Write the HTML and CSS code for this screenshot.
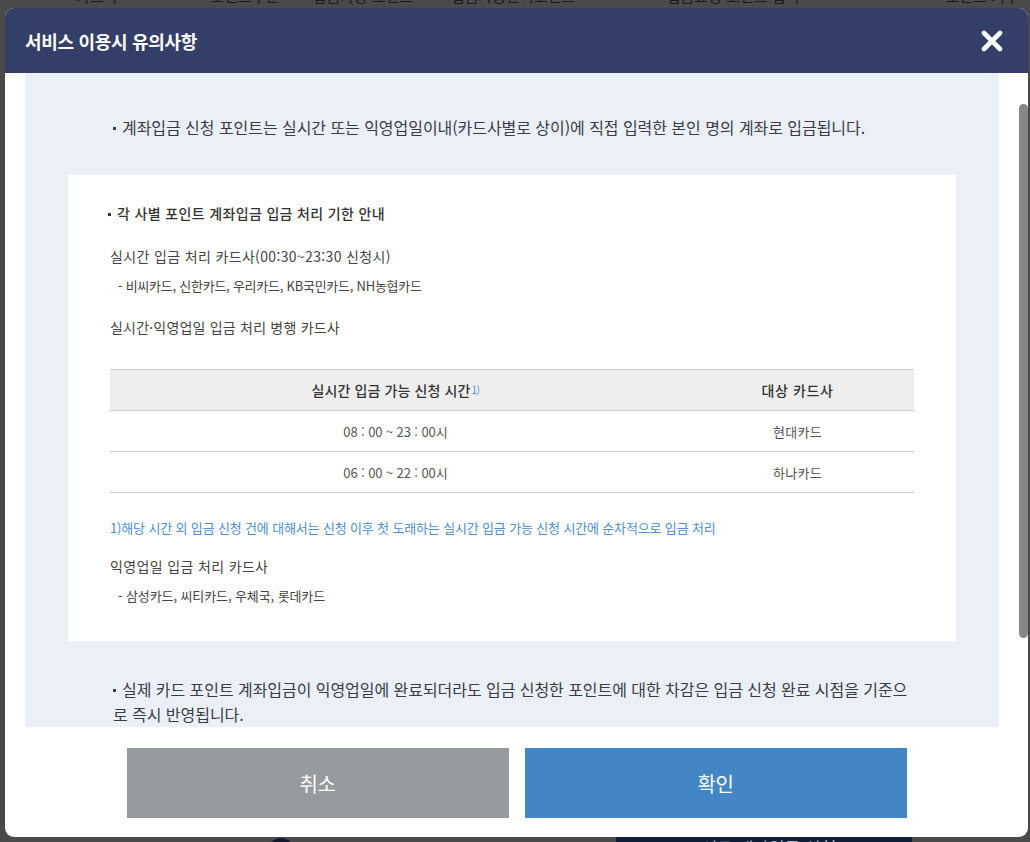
FILE: index.html
```html
<!DOCTYPE html>
<html lang="ko">
<head>
<meta charset="utf-8">
<title>서비스 이용시 유의사항</title>
<link rel="stylesheet" href="styles.css">
</head>
<body>
<div class="page">
  <div class="bg-head">
    <span class="c1">카드사</span>
    <span class="c2">포인트구분</span>
    <span class="c3">입금가능 포인트</span>
    <span class="c4">입금가능잔여포인트</span>
    <span class="c5">입금요청 포인트 입력</span>
    <span class="c6">포인트 기부</span>
  </div>
  <div class="bg-foot">
    <span class="bg-dot"></span>
    <span class="bg-btn">포인트 계좌입금 신청</span>
  </div>

  <div class="modal">
    <div class="modal-head">
      <h1 class="modal-title">서비스 이용시 유의사항</h1>
      <button class="close-btn" aria-label="닫기">
        <svg width="22" height="22" viewBox="0 0 22 22"><path d="M3 3 L19 19 M19 3 L3 19" stroke="#fff" stroke-width="4.6" stroke-linecap="round"/></svg>
      </button>
    </div>
    <div class="modal-body">
      <div class="scroll-area">
        <p class="note"><span class="dot"></span>계좌입금 신청 포인트는 실시간 또는 익영업일이내(카드사별로 상이)에 직접 입력한 본인 명의 계좌로 입금됩니다.</p>
        <div class="info-box">
          <p class="info-title"><span class="dot dot2"></span>각 사별 포인트 계좌입금 입금 처리 기한 안내</p>
          <p class="line l-a">실시간 입금 처리 카드사(00:30~23:30 신청시)</p>
          <p class="sub l-b">- 비씨카드, 신한카드, 우리카드, KB국민카드, NH농협카드</p>
          <p class="line l-c">실시간·익영업일 입금 처리 병행 카드사</p>
          <table class="tbl">
            <thead>
              <tr><th class="col1">실시간 입금 가능 신청 시간<sup>1)</sup></th><th class="col2">대상 카드사</th></tr>
            </thead>
            <tbody>
              <tr><td>08 : 00 ~ 23 : 00시</td><td class="card">현대카드</td></tr>
              <tr><td>06 : 00 ~ 22 : 00시</td><td class="card">하나카드</td></tr>
            </tbody>
          </table>
          <p class="foot-note">1)해당 시간 외 입금 신청 건에 대해서는 신청 이후 첫 도래하는 실시간 입금 가능 신청 시간에 순차적으로 입금 처리</p>
          <p class="line line2 l-d">익영업일 입금 처리 카드사</p>
          <p class="sub sub2 l-b">- 삼성카드, 씨티카드, 우체국, 롯데카드</p>
        </div>
        <p class="note note2"><span class="dot"></span>실제 카드 포인트 계좌입금이 익영업일에 완료되더라도 입금 신청한 포인트에 대한 차감은 입금 신청 완료 시점을 기준으로 즉시 반영됩니다.</p>
      </div>
      <div class="scroll-thumb"></div>
    </div>
    <div class="modal-foot">
      <button class="btn btn-cancel">취소</button>
      <button class="btn btn-ok">확인</button>
    </div>
  </div>
</div>
</body>
</html>
```

FILE: styles.css
```css
* { box-sizing: border-box; }
html, body { margin: 0; padding: 0; }
body {
  width: 1030px;
  height: 842px;
  overflow: hidden;
  background: #4a4a4a;
  font-family: "Noto Sans CJK KR", "Noto Sans", sans-serif;
  color: #3a3a3a;
}
.page {
  position: relative;
  width: 1030px;
  height: 842px;
  display: flex;
  flex-direction: column;
  justify-content: space-between;
}
.bg-head {
  position: relative;
  height: 20px;
  margin-top: -14px;
  font-size: 15px;
  line-height: 20px;
  color: #161a22;
}
.bg-head span { position: absolute; top: 0; transform: translateX(-50%); white-space: nowrap; }
.bg-head .c1 { left: 97px; }
.bg-head .c2 { left: 245px; }
.bg-head .c3 { left: 363px; }
.bg-head .c4 { left: 513px; }
.bg-head .c5 { left: 733px; }
.bg-head .c6 { left: 982px; }
.bg-foot {
  position: relative;
  height: 6px;
}
.bg-dot {
  position: absolute;
  left: 268px; top: 2px;
  width: 26px; height: 26px;
  border-radius: 50%;
  background: #0f1a2e;
}
.bg-btn {
  position: absolute;
  left: 616px; top: 0;
  width: 296px; height: 40px;
  background: #0f1e36;
  color: #b0b8c8;
  font-size: 17px;
  padding-top: 2px;
  padding-left: 70px;
  line-height: 20px;
}

.modal {
  position: absolute;
  left: 5px;
  top: 8px;
  width: 1023px;
  height: 829px;
  background: #fff;
  border-radius: 9px;
  overflow: hidden;
  display: flex;
  flex-direction: column;
}
.modal-head {
  height: 65px;
  flex: none;
  background: #333f68;
  display: flex;
  align-items: center;
  justify-content: space-between;
  padding: 0 25px 0 20px;
}
.modal-title {
  margin: 0;
  color: #fff;
  font-size: 18px;
  font-weight: 700;
  letter-spacing: -0.3px;
  line-height: 24px;
}
.close-btn {
  border: 0;
  background: transparent;
  padding: 0;
  width: 22px;
  height: 22px;
  display: flex;
}
.modal-body {
  position: relative;
  height: 654px;
  flex: none;
  padding: 0 29px 0 20px;
}
.scroll-area {
  height: 654px;
  overflow: hidden;
  background: #ebf0f8;
  padding: 42px 43px 0 43px;
}
.scroll-thumb {
  position: absolute;
  right: 0;
  top: 31px;
  width: 9px;
  height: 534px;
  border-radius: 5px;
  background: #878787;
}
.note {
  margin: 0;
  padding: 0 42px 0 45px;
  font-size: 16px;
  line-height: 25px;
  letter-spacing: -0.05px;
  color: #3a3b46;
}
.dot {
  display: inline-block;
  width: 3px;
  height: 3px;
  background: #3a3b46;
  vertical-align: middle;
  margin: 0 6px 2px 0;
}
.dot2 { margin: 0 6px 2px 1px; background: #333; }
.note2 { margin-top: 36px; }
.info-box {
  margin-top: 35px;
  background: #fff;
  padding: 28px 42px 35px 42px;
}
.info-box p { margin: 0; }
.info-title {
  font-size: 14px;
  line-height: 20px;
  font-weight: 500;
  letter-spacing: 0.35px;
  color: #333;
  margin-left: -3px !important;
}
.line {
  font-size: 14px;
  line-height: 20px;
  letter-spacing: 0.35px;
  color: #444;
}
.line2 { letter-spacing: 0.35px; }
.sub {
  font-size: 13px;
  line-height: 20px;
  letter-spacing: -0.25px;
  color: #444;
  padding-left: 8px;
}
.sub2 { letter-spacing: -0.1px; }
.l-a { margin-top: 23px !important; }
.l-b { margin-top: 10px !important; }
.l-c { margin-top: 21px !important; letter-spacing: 0.2px; }
.l-d { margin-top: 18px !important; }
.tbl {
  margin-top: 32px;
  width: 100%;
  border-collapse: collapse;
  border-top: 1px solid #cdcdcd;
}
.tbl th {
  height: 41px;
  background: #eeeeee;
  font-size: 14px;
  font-weight: 500;
  letter-spacing: 0.1px;
  color: #333;
  border-bottom: 1px solid #cdcdcd;
  padding: 0;
}
.tbl th.col1 { width: 71%; }
.tbl th.col2 { letter-spacing: 0.6px; }
.tbl th sup {
  font-size: 10px;
  color: #4a8fd6;
  vertical-align: 2px;
  margin-left: 1px;
  font-weight: 400;
  letter-spacing: -0.5px;
}
.tbl td {
  height: 41px;
  text-align: center;
  font-size: 13px;
  color: #555;
  letter-spacing: -0.1px;
  border-bottom: 1px solid #cdcdcd;
  padding: 0;
}
.tbl td.card { letter-spacing: 0.3px; }
.foot-note {
  margin-top: 25px !important;
  font-size: 13px;
  line-height: 20px;
  letter-spacing: -0.15px;
  color: #4a8fd6;
}
.modal-foot {
  flex: 1;
  display: flex;
  justify-content: center;
  gap: 16px;
  padding-top: 21px;
}
.btn {
  width: 382px;
  height: 70px;
  border: 0;
  color: #fff;
  font-family: inherit;
  font-size: 20px;
  letter-spacing: -0.3px;
}
.btn-cancel { background: #959a9e; }
.btn-ok { background: #4386c6; }
```
